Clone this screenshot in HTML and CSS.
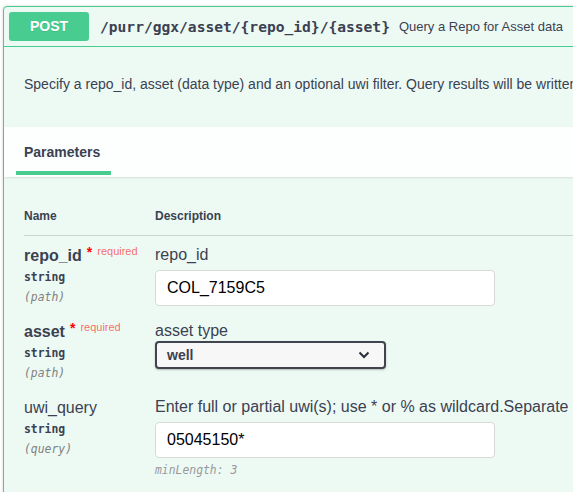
FILE: index.html
```html
<!DOCTYPE html>
<html>
<head>
<meta charset="utf-8">
<link rel="stylesheet" href="styles.css">
</head>
<body>
<div class="opblock">
  <div class="summary">
    <span class="method">POST</span>
    <span class="path">/purr/ggx/asset/{repo_id}/{asset}</span>
    <span class="summary-desc">Query a Repo for Asset data</span>
  </div>
  <div class="desc-wrap">
    <p>Specify a repo_id, asset (data type) and an optional uwi filter. Query results will be written to a file in the repo folder.</p>
  </div>
  <div class="section-header">
    <h4 class="tab">Parameters</h4>
  </div>
  <div class="params">
    <div class="table">
      <div class="th">Name</div>
      <div class="th">Description</div>

      <div class="name-col">
        <div class="pname bold">repo_id<span class="star">*</span><span class="req">required</span></div>
        <div class="ptype">string</div>
        <div class="pin">(path)</div>
      </div>
      <div class="desc-col">
        <div class="pdesc">repo_id</div>
        <div class="input">COL_7159C5</div>
      </div>

      <div class="name-col">
        <div class="pname bold">asset<span class="star">*</span><span class="req">required</span></div>
        <div class="ptype">string</div>
        <div class="pin">(path)</div>
      </div>
      <div class="desc-col">
        <div class="pdesc">asset type</div>
        <div class="select"><span>well</span>
          <svg class="chev" width="12" height="8" viewBox="0 0 12 8"><path d="M1.5 1.5 L6 6 L10.5 1.5" fill="none" stroke="#2b2f3a" stroke-width="2"/></svg>
        </div>
      </div>

      <div class="name-col">
        <div class="pname">uwi_query</div>
        <div class="ptype">string</div>
        <div class="pin">(query)</div>
      </div>
      <div class="desc-col">
        <div class="pdesc nowrap">Enter full or partial uwi(s); use * or % as wildcard.Separate multiple uwis with a comma.</div>
        <div class="input">05045150*</div>
        <div class="minlen">minLength: 3</div>
      </div>
    </div>
  </div>
</div>
</body>
</html>
```
FILE: styles.css
```css
html, body {
  margin: 0;
  padding: 0;
  background: #ffffff;
  overflow: hidden;
}
body {
  width: 573px;
  height: 492px;
  font-family: "Liberation Sans", Arial, sans-serif;
  color: #3b4151;
}
.opblock {
  margin: 6px 0 0 3px;
  width: 900px;
  height: 600px;
  border: 1px solid #49cc90;
  border-radius: 4px;
  background: #edfaf4;
  box-shadow: 0 0 3px rgba(0, 0, 0, 0.19);
}
.summary {
  display: flex;
  align-items: center;
  padding: 5px;
  border-bottom: 1px solid #49cc90;
  height: 29px;
}
.method {
  width: 80px;
  height: 29px;
  line-height: 29px;
  text-align: center;
  background: #49cc90;
  color: #fff;
  font-weight: 700;
  font-size: 14px;
  border-radius: 3px;
  text-shadow: 0 1px 0 rgba(0,0,0,0.1);
}
.path {
  margin-left: 11px;
  font-family: "DejaVu Sans Mono", monospace;
  font-weight: 700;
  font-size: 14.6px;
  color: #3b4151;
  white-space: nowrap;
}
.summary-desc {
  margin-left: 9px;
  font-size: 13px;
  white-space: nowrap;
  color: #3b4151;
}
.desc-wrap {
  padding: 29px 20px 34px;
}
.desc-wrap p {
  margin: 0;
  font-size: 14px;
  line-height: 17px;
  white-space: nowrap;
}
.section-header {
  height: 50px;
  background: rgba(255, 255, 255, 0.85);
  box-shadow: 0 1px 2px rgba(0, 0, 0, 0.1);
  padding: 0 0 0 20px;
  box-sizing: border-box;
}
.tab {
  position: relative;
  display: inline-block;
  margin: 0;
  padding-top: 17px;
  font-size: 14px;
  line-height: 17px;
  font-weight: 700;
}
.tab::after {
  content: "";
  position: absolute;
  left: -8px;
  width: 95px;
  top: 44px;
  height: 4px;
  background: #49cc90;
}
.params {
  padding: 20px 0 0 20px;
}
.table {
  display: grid;
  grid-template-columns: 131px 1fr;
}
.th {
  font-size: 12px;
  font-weight: 700;
  line-height: 14px;
  padding: 12px 0 12px;
  border-bottom: 1px solid rgba(59, 65, 81, 0.2);
}
.name-col {
  padding: 11px 0 8px;
}
.desc-col {
  padding: 10px 0 0;
}
.pname {
  font-size: 16px;
  line-height: 18px;
  height: 18px;
  white-space: nowrap;
}
.bold {
  font-weight: 700;
}
.star {
  color: #ff0000;
  font-size: 14px;
  line-height: 0;
  position: relative;
  top: -4px;
  font-weight: 700;
  padding-left: 5px;
}
.req {
  color: rgba(255, 0, 0, 0.6);
  font-size: 11px;
  line-height: 0;
  font-weight: 400;
  padding-left: 5px;
  position: relative;
  top: -6px;
}
.ptype {
  font-family: "DejaVu Sans Mono", monospace;
  font-size: 11.4px;
  font-weight: 700;
  line-height: 14px;
  padding: 5px 0;
}
.pin {
  font-family: "DejaVu Sans Mono", monospace;
  font-size: 11.4px;
  font-style: italic;
  color: #808080;
  line-height: 14px;
  padding-top: 1px;
}
.pdesc {
  font-size: 16px;
  line-height: 18px;
}
.nowrap {
  white-space: nowrap;
}
.input {
  margin-top: 6px;
  width: 340px;
  height: 36px;
  box-sizing: border-box;
  border: 1px solid #d9d9d9;
  border-radius: 4px;
  background: #fff;
  padding: 0 11px;
  font-size: 16px;
  line-height: 34px;
  color: #000;
}
.select {
  margin-top: 1px;
  width: 231px;
  height: 28px;
  box-sizing: border-box;
  border: 2px solid #41444e;
  border-radius: 4px;
  background: #f7f7f7;
  box-shadow: 0 1px 2px 0 rgba(0,0,0,0.25);
  display: flex;
  align-items: center;
  justify-content: space-between;
  padding: 0 14px 0 10px;
  font-size: 14px;
  font-weight: 700;
  color: #3b4151;
}
.chev {
  display: block;
}
.minlen {
  margin-top: 5px;
  font-family: "DejaVu Sans Mono", monospace;
  font-size: 11.4px;
  font-style: italic;
  color: #999;
  line-height: 14px;
}
```
